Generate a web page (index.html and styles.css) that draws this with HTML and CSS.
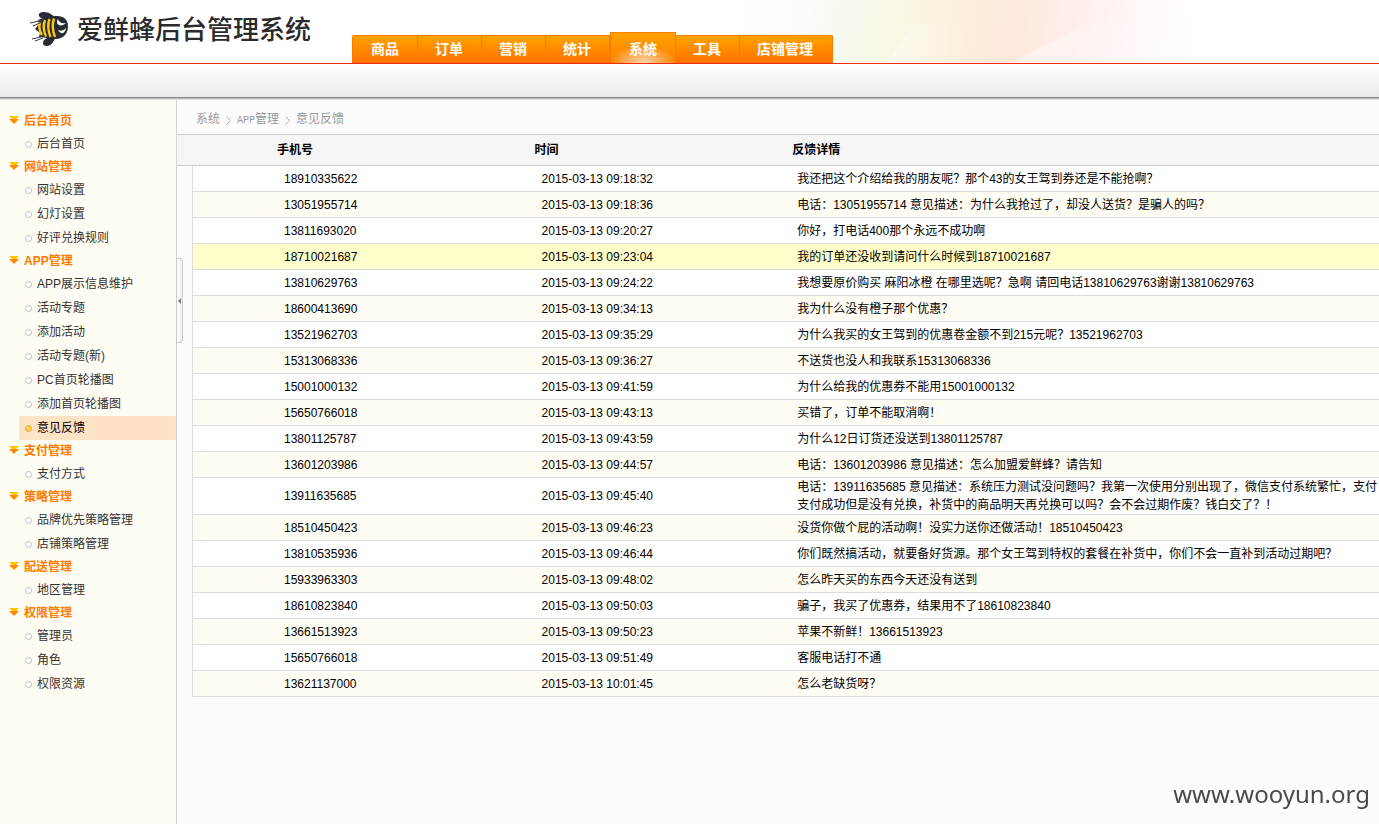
FILE: index.html
```html
<!DOCTYPE html>
<html lang="zh-CN">
<head>
  <meta charset="UTF-8">
  <title>爱鲜蜂后台管理系统</title>
  <link rel="stylesheet" href="styles.css">
</head>
<body>
  <header class="header">
    <svg class="header-art" width="520" height="63" viewBox="0 0 520 63" aria-hidden="true">
      <defs>
        <linearGradient id="glow" gradientUnits="userSpaceOnUse" x1="60" y1="0" x2="510" y2="70">
          <stop offset="0" stop-color="#fff"/>
          <stop offset=".14" stop-color="#fafdf9"/>
          <stop offset=".24" stop-color="#f5faee"/>
          <stop offset=".34" stop-color="#f8f8e4"/>
          <stop offset=".46" stop-color="#fbf0dc"/>
          <stop offset=".6" stop-color="#fde9dc"/>
          <stop offset=".74" stop-color="#feeeec"/>
          <stop offset=".88" stop-color="#fff9f8"/>
          <stop offset="1" stop-color="#fff"/>
        </linearGradient>
        <linearGradient id="veil" x1="0" y1="0" x2="1" y2="0">
          <stop offset="0" stop-color="#fff" stop-opacity=".4"/>
          <stop offset="1" stop-color="#fff" stop-opacity="0"/>
        </linearGradient>
      </defs>
      <path d="M0 0H498Q516 30 520 63H0Z" fill="url(#glow)"/>
      <path d="M207 63Q219 40 236 24H290L280 63Z" fill="url(#veil)"/>
      <path d="M334 63Q371 39 413 24H490L505 63Z" fill="url(#veil)"/>
    </svg>
    <a class="logo" href="#">
      <svg width="40" height="36" viewBox="0 0 40 36" aria-hidden="true">
        <g fill="#292c35">
          <path d="M9 4C8 1 11 0 14 0C19 0 23 3 25 6L16 7C12 7 10 6 9 4Z"/>
          <path d="M13 31C13 28 16 26 20 25H26C24 28 22 34 17 34C14 34 13 33 13 31Z"/>
          <path d="M5 17L9 12L8 8C13 6 19 4 27 4C34 4 38 8 38 14C38 22 33 27 26 27C19 27 14 25 9 25L10 21Z"/>
        </g>
        <g fill="none" stroke="#ffc916" stroke-width="2.4">
          <path d="M10.500 10Q7.500 16 12 23"/>
          <path d="M15 8Q12 16 16 24.500"/>
          <path d="M19.500 7Q16.500 15 20.500 25"/>
          <path d="M24 6.500Q21 15 25 25"/>
        </g>
        <path d="M0 11L14 8M3 14L12 10M2 27L15 24M5 29L13 26" fill="none" stroke="#3b3d44"/>
        <path d="M28 7Q29 12 36 11Q30 16 27 11Q27 8 28 7ZM28 18Q33 20 36 16Q35 22 31 21Q29 20 28 18Z" fill="#fff"/>
      </svg>
      <span>爱鲜蜂后台管理系统</span>
    </a>
    <nav class="nav">
      <a href="#">商品</a>
      <a href="#">订单</a>
      <a href="#">营销</a>
      <a href="#">统计</a>
      <a href="#" class="active">系统</a>
      <a href="#">工具</a>
      <a href="#">店铺管理</a>
    </nav>
  </header>
  <div class="toolbar"></div>

  <div class="main">
    <aside class="sidebar">
      <h3>后台首页</h3>
      <ul>
        <li><a href="#">后台首页</a></li>
      </ul>
      <h3>网站管理</h3>
      <ul>
        <li><a href="#">网站设置</a></li>
        <li><a href="#">幻灯设置</a></li>
        <li><a href="#">好评兑换规则</a></li>
      </ul>
      <h3>APP管理</h3>
      <ul>
        <li><a href="#">APP展示信息维护</a></li>
        <li><a href="#">活动专题</a></li>
        <li><a href="#">添加活动</a></li>
        <li><a href="#">活动专题(新)</a></li>
        <li><a href="#">PC首页轮播图</a></li>
        <li><a href="#">添加首页轮播图</a></li>
        <li><a href="#" class="current">意见反馈</a></li>
      </ul>
      <h3>支付管理</h3>
      <ul>
        <li><a href="#">支付方式</a></li>
      </ul>
      <h3>策略管理</h3>
      <ul>
        <li><a href="#">品牌优先策略管理</a></li>
        <li><a href="#">店铺策略管理</a></li>
      </ul>
      <h3>配送管理</h3>
      <ul>
        <li><a href="#">地区管理</a></li>
      </ul>
      <h3>权限管理</h3>
      <ul>
        <li><a href="#">管理员</a></li>
        <li><a href="#">角色</a></li>
        <li><a href="#">权限资源</a></li>
      </ul>
      <button class="fold-btn" type="button" aria-label="收起菜单"></button>
    </aside>

    <div class="content">
      <div class="crumbs">
        <span>系统</span>
        <svg width="5" height="9" viewBox="0 0 5 9"><path d="M.5 .5L4.5 4.5L.5 8.5"/></svg>
        <span><small>APP</small>管理</span>
        <svg width="5" height="9" viewBox="0 0 5 9"><path d="M.5 .5L4.5 4.5L.5 8.5"/></svg>
        <span>意见反馈</span>
      </div>
      <table class="list">
        <thead>
          <tr><th class="col-blank"></th><th class="col-info">手机号</th><th class="col-info">时间</th><th>反馈详情</th></tr>
        </thead>
        <tbody>
          <tr><td></td><td>18910335622</td><td>2015-03-13 09:18:32</td><td>我还把这个介绍给我的朋友呢？那个43的女王驾到券还是不能抢啊？</td></tr>
          <tr><td></td><td>13051955714</td><td>2015-03-13 09:18:36</td><td>电话：13051955714 意见描述：为什么我抢过了，却没人送货？是骗人的吗？</td></tr>
          <tr><td></td><td>13811693020</td><td>2015-03-13 09:20:27</td><td>你好，打电话400那个永远不成功啊</td></tr>
          <tr class="hover"><td></td><td>18710021687</td><td>2015-03-13 09:23:04</td><td>我的订单还没收到请问什么时候到18710021687</td></tr>
          <tr><td></td><td>13810629763</td><td>2015-03-13 09:24:22</td><td>我想要原价购买 麻阳冰橙 在哪里选呢？急啊 请回电话13810629763谢谢13810629763</td></tr>
          <tr><td></td><td>18600413690</td><td>2015-03-13 09:34:13</td><td>我为什么没有橙子那个优惠？</td></tr>
          <tr><td></td><td>13521962703</td><td>2015-03-13 09:35:29</td><td>为什么我买的女王驾到的优惠卷金额不到215元呢？13521962703</td></tr>
          <tr><td></td><td>15313068336</td><td>2015-03-13 09:36:27</td><td>不送货也没人和我联系15313068336</td></tr>
          <tr><td></td><td>15001000132</td><td>2015-03-13 09:41:59</td><td>为什么给我的优惠券不能用15001000132</td></tr>
          <tr><td></td><td>15650766018</td><td>2015-03-13 09:43:13</td><td>买错了，订单不能取消啊！</td></tr>
          <tr><td></td><td>13801125787</td><td>2015-03-13 09:43:59</td><td>为什么12日订货还没送到13801125787</td></tr>
          <tr><td></td><td>13601203986</td><td>2015-03-13 09:44:57</td><td>电话：13601203986 意见描述：怎么加盟爱鲜蜂？请告知</td></tr>
          <tr><td></td><td>13911635685</td><td>2015-03-13 09:45:40</td><td>电话：13911635685 意见描述：系统压力测试没问题吗？我第一次使用分别出现了，微信支付系统繁忙，支付<br>支付成功但是没有兑换，补货中的商品明天再兑换可以吗？会不会过期作废？钱白交了？！</td></tr>
          <tr><td></td><td>18510450423</td><td>2015-03-13 09:46:23</td><td>没货你做个屁的活动啊！没实力送你还做活动！18510450423</td></tr>
          <tr><td></td><td>13810535936</td><td>2015-03-13 09:46:44</td><td>你们既然搞活动，就要备好货源。那个女王驾到特权的套餐在补货中，你们不会一直补到活动过期吧？</td></tr>
          <tr><td></td><td>15933963303</td><td>2015-03-13 09:48:02</td><td>怎么昨天买的东西今天还没有送到</td></tr>
          <tr><td></td><td>18610823840</td><td>2015-03-13 09:50:03</td><td>骗子，我买了优惠券，结果用不了18610823840</td></tr>
          <tr><td></td><td>13661513923</td><td>2015-03-13 09:50:23</td><td>苹果不新鲜！13661513923</td></tr>
          <tr><td></td><td>15650766018</td><td>2015-03-13 09:51:49</td><td>客服电话打不通</td></tr>
          <tr><td></td><td>13621137000</td><td>2015-03-13 10:01:45</td><td>怎么老缺货呀？</td></tr>
        </tbody>
      </table>
    </div>
  </div>

  <div class="site-mark">www.wooyun.org</div>
</body>
</html>
```
FILE: styles.css
```css
*,
*::before,
*::after {
  box-sizing: border-box;
}
body {
  margin: 0;
  min-height: 100vh;
  display: flex;
  flex-direction: column;
  background: #fcfcfc;
  color: #000;
  font: 12px/18px "Liberation Sans", "Noto Sans CJK SC", sans-serif;
}
a {
  color: inherit;
  text-decoration: none;
}

/* 头部 */
.header {
  position: relative;
  height: 64px;
  display: flex;
  align-items: flex-end;
  background: #fff;
  border-bottom: 1px solid #f22c0a;
}
.header-art {
  position: absolute;
  left: 680px;
  top: 0;
}
.logo {
  width: 352px;
  height: 63px;
  padding: 0 0 3px 30px;
  display: flex;
  align-items: center;
  gap: 7px;
  color: #2b2b2b;
  font-size: 26px;
  font-weight: 500;
  line-height: 36px;
  white-space: nowrap;
}
.logo svg {
  flex: none;
}
.nav {
  position: relative;
  display: flex;
  align-items: flex-end;
}
.nav a {
  height: 28px;
  padding: 0 18px 0 17px;
  border-top: 1px solid #f97c00;
  border-right: 1px solid #f97c00;
  background: linear-gradient(to bottom, #ffa200, #ff7200);
  color: #fff;
  font-size: 14px;
  font-weight: bold;
  line-height: 27px;
}
.nav a:first-child {
  padding-left: 18px;
  border-left: 1px solid #f97c00;
  border-top-left-radius: 2px;
}
.nav a:last-child {
  padding-right: 19px;
  border-top-right-radius: 2px;
}
.nav a.active {
  height: 31px;
  padding-left: 18px;
  border-left: 1px solid #f97c00;
  line-height: 32px;
  background: radial-gradient(ellipse 34px 18px at 50% 100%, #ffd9ae, rgba(255, 190, 110, 0)), linear-gradient(to bottom, #ffa200, #ff7f00);
}
.toolbar {
  height: 36px;
  background: linear-gradient(to bottom, #fff, #e9e9e9);
  border-bottom: 1px solid #e0e0e0;
  box-shadow: inset 0 -1px 0 #bbb, inset 0 -2px 0 #8c8c8c;
}

/* 左侧菜单 */
.main {
  flex: 1;
  display: flex;
}
.sidebar {
  position: relative;
  flex: none;
  width: 177px;
  padding: 10px 0 20px;
  background: #fffdf3;
  border-right: 1px solid #d5d5d5;
  color: #333;
}
.sidebar h3 {
  position: relative;
  margin: 0;
  padding-left: 24px;
  color: #ff7a00;
  font-size: 12px;
  line-height: 22px;
}
.sidebar h3::before,
.sidebar h3::after {
  content: "";
  position: absolute;
  left: 9px;
  top: 6px;
  border: 5px solid transparent;
  border-top-color: #ffc400;
  border-bottom: 0;
}
.sidebar h3::after {
  top: 9px;
  border-top-color: #ff8a00;
}
.sidebar ul {
  margin: 0;
  padding: 0 0 0 19px;
  list-style: none;
}
.sidebar li a {
  display: flex;
  align-items: center;
  gap: 5px;
  padding-left: 6px;
  line-height: 24px;
}
.sidebar li a::before {
  content: "";
  width: 7px;
  height: 7px;
  border: 1px solid #c0c0c0;
  border-radius: 50%;
  background: #fff;
}
.sidebar li a.current {
  background: #ffe3c6;
  color: #000;
}
.sidebar li a.current::before {
  border-color: #f0a830;
  background: #ffd450;
}
.fold-btn {
  position: absolute;
  left: 176px;
  top: 158px;
  width: 7px;
  height: 85px;
  padding: 0;
  border: 1px solid #ccc;
  border-radius: 0 3px 3px 0;
  background: linear-gradient(to right, #fff, #eee);
}
.fold-btn::before {
  content: "";
  display: block;
  width: 3px;
  margin-left: 1px;
  border: 3px solid transparent;
  border-right-color: #777;
  border-left: 0;
}

/* 右侧列表 */
.content {
  flex: 1;
  min-width: 0;
}
.crumbs {
  height: 34px;
  padding: 6px 0 0 19px;
  display: flex;
  align-items: center;
  gap: 6px;
  color: #999;
  font-family: "Liberation Mono", "Noto Sans CJK SC", monospace;
}
.crumbs small {
  font-size: 10px;
}
.crumbs svg {
  fill: none;
  stroke: #aaa;
}
.list {
  width: calc(100% - 15px);
  margin-left: 15px;
  table-layout: fixed;
  border-collapse: separate;
  border-spacing: 0;
}
.list th {
  height: 32px;
  padding: 0;
  border-top: 1px solid #ccc;
  border-bottom: 1px solid #ccc;
  background: #f5f5f5;
  text-align: left;
}
.list .col-blank {
  width: 85px;
  /* 表头向左延伸到菜单边 */
  box-shadow: -16px 0 0 -1px #f5f5f5, -15px 0 0 #ccc;
}
.list .col-info {
  width: 21.7%;
}
.list td {
  height: 26px;
  padding: 0 0 0 7px;
  border-bottom: 1px solid #ddd;
  background: #fff;
  white-space: nowrap;
}
.list td:first-child {
  border-left: 1px solid #ddd;
}
.list td:last-child {
  padding-left: 5px;
  overflow: hidden;
}
.list tr:nth-child(even) td {
  background: #fffcf3;
}
.list tr.hover td {
  background: #ffffcc;
}

.site-mark {
  position: fixed;
  right: 9px;
  bottom: 13px;
  color: #4a4a4a;
  font: 24px/34px "Noto Sans", sans-serif;
}
```
